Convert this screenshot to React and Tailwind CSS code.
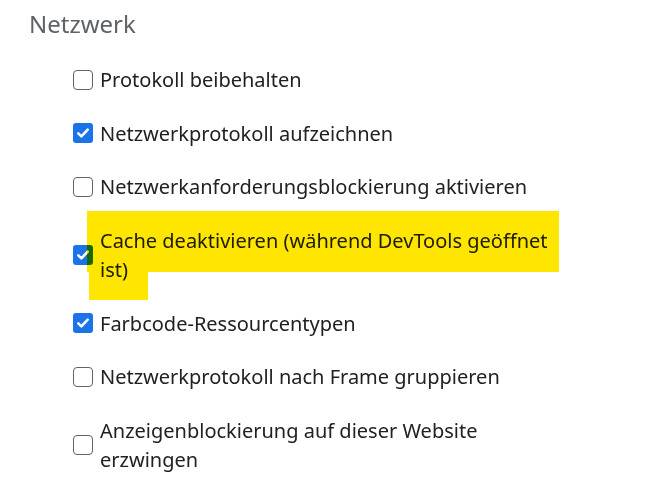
import React from 'react';

const items = [
  { label: 'Protokoll beibehalten', checked: false },
  { label: 'Netzwerkprotokoll aufzeichnen', checked: true },
  { label: 'Netzwerkanforderungsblockierung aktivieren', checked: false },
  { label: 'Cache deaktivieren (während DevTools geöffnet ist)', checked: true, highlight: true },
  { label: 'Farbcode-Ressourcentypen', checked: true },
  { label: 'Netzwerkprotokoll nach Frame gruppieren', checked: false },
  { label: 'Anzeigenblockierung auf dieser Website erzwingen', checked: false },
];

function Box({ checked }) {
  if (checked) {
    return (
      <span className="flex h-[20px] w-[20px] shrink-0 items-center justify-center rounded-[3px] bg-[#1a73e8]">
        <svg width="14" height="14" viewBox="0 0 14 14" fill="none">
          <path d="M2.3 7.4l3.1 3 6.3-6.8" stroke="white" strokeWidth="2.6" strokeLinecap="round" strokeLinejoin="round" />
        </svg>
      </span>
    );
  }
  return <span className="h-[20px] w-[20px] shrink-0 rounded-[4px] border-[1.5px] border-[#5f6368] bg-white" />;
}

export default function App() {
  return (
    <div className="h-[502px] w-[672px] overflow-hidden bg-white" style={{ fontFamily: '"Noto Sans", "Open Sans", sans-serif' }}>
      <h2 className="pl-[29px] pt-[8px] text-[24px] leading-[32px] text-[#5f6368]">Netzwerk</h2>
      <div className="mt-[25px] flex flex-col gap-[24px] pl-[73px]">
        {items.map(item => (
          <div key={item.label} className="relative flex items-center gap-[7px]">
            <Box checked={item.checked} />
            <span className="max-w-[460px] text-[20px] leading-[29.5px] text-[#202124]">{item.label}</span>
            {item.highlight && (
              <>
                <span className="pointer-events-none absolute left-[14px] top-[-15px] h-[61px] w-[472px] bg-[#ffe600] mix-blend-multiply" />
                <span className="pointer-events-none absolute left-[16px] top-[46px] h-[28px] w-[59px] bg-[#ffe600] mix-blend-multiply" />
              </>
            )}
          </div>
        ))}
      </div>
    </div>
  );
}
